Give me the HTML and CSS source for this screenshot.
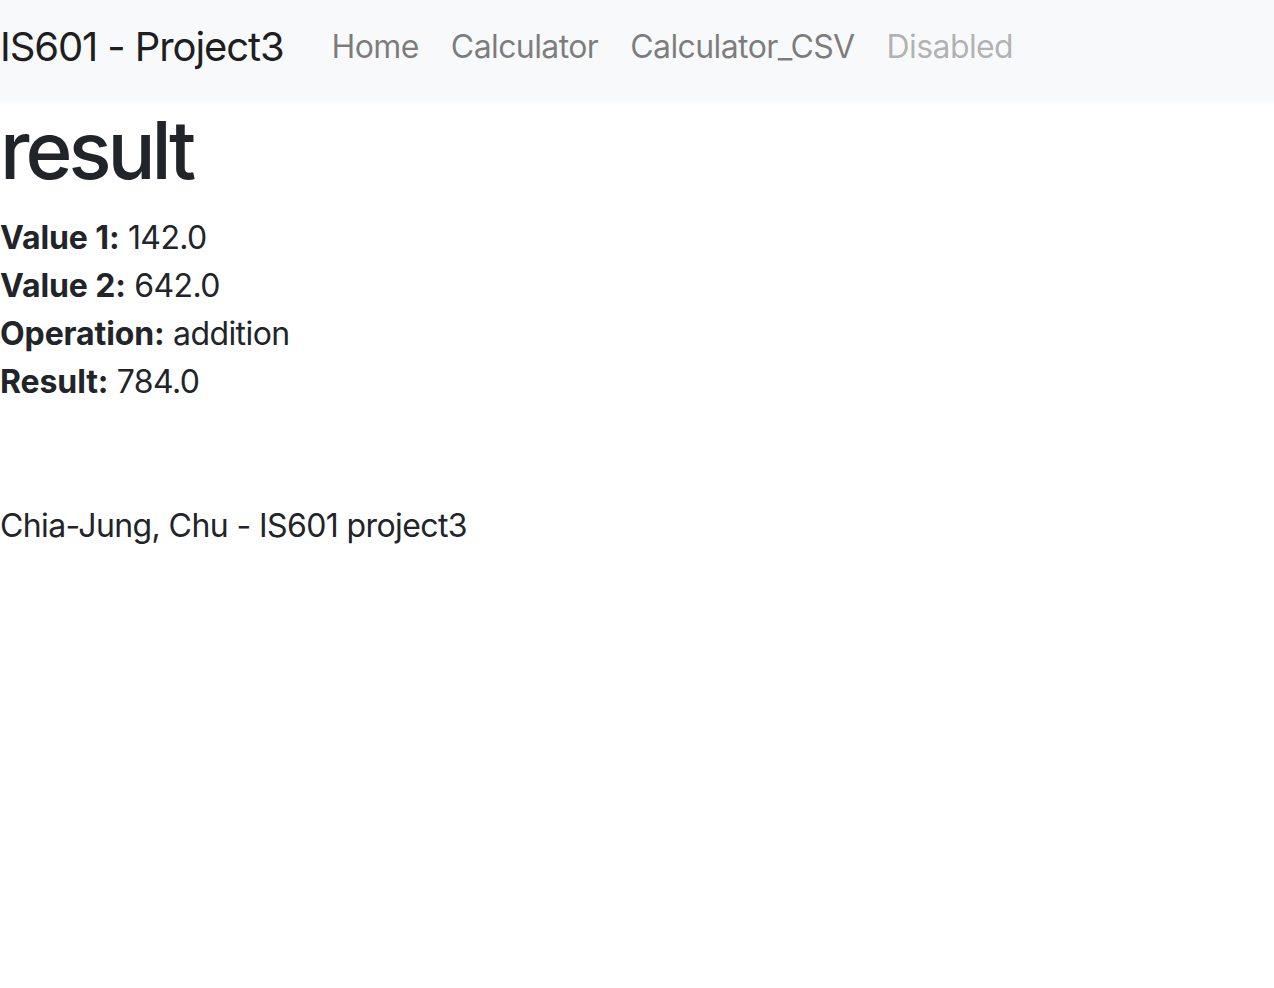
FILE: index.html
```html
<!DOCTYPE html>
<html>
<head>
<meta charset="utf-8">
<title>result</title>
<link rel="stylesheet" href="styles.css">
</head>
<body>
<nav class="navbar">
  <a class="brand" href="#">IS601 - Project3</a>
  <ul class="nav">
    <li><a class="nav-link" href="#">Home</a></li>
    <li><a class="nav-link" href="#">Calculator</a></li>
    <li><a class="nav-link" href="#">Calculator_CSV</a></li>
    <li><a class="nav-link disabled" href="#">Disabled</a></li>
  </ul>
</nav>
<main class="content">
  <h1 class="title">result</h1>
  <div class="row"><b>Value 1:</b> 142.0</div>
  <div class="row"><b>Value 2:</b> 642.0</div>
  <div class="row"><b>Operation:</b> addition</div>
  <div class="row"><b>Result:</b> 784.0</div>
  <footer class="footer">Chia-Jung, Chu - IS601 project3</footer>
</main>
</body>
</html>
```
FILE: styles.css
```css
html, body {
  margin: 0;
  padding: 0;
  background: #fff;
}
body {
  font-family: Inter, "Noto Sans", "Liberation Sans", sans-serif;
  font-size: 32px;
  line-height: 48px;
  color: #212529;
}
.navbar {
  display: flex;
  align-items: center;
  box-sizing: border-box;
  height: 102px;
  padding-bottom: 8px;
  background: #f8f9fa;
}
.brand {
  font-size: 40px;
  line-height: 60px;
  color: rgba(0, 0, 0, 0.9);
  text-decoration: none;
  margin-right: 32px;
  letter-spacing: -1.1px;
}
.nav {
  display: flex;
  list-style: none;
  margin: 0;
  padding: 0;
}
.nav-link {
  display: block;
  padding: 0 16px;
  color: rgba(0, 0, 0, 0.5);
  text-decoration: none;
  letter-spacing: -0.6px;
}
.nav-link.disabled {
  color: rgba(0, 0, 0, 0.3);
}
.title {
  margin: 0 0 16px 0;
  font-size: 80px;
  line-height: 96px;
  font-weight: 500;
  letter-spacing: -4px;
}
.row {
  letter-spacing: -0.6px;
}
.row b {
  font-weight: 700;
  letter-spacing: -0.1px;
}
.footer {
  margin-top: 96px;
  letter-spacing: -0.6px;
}
```
